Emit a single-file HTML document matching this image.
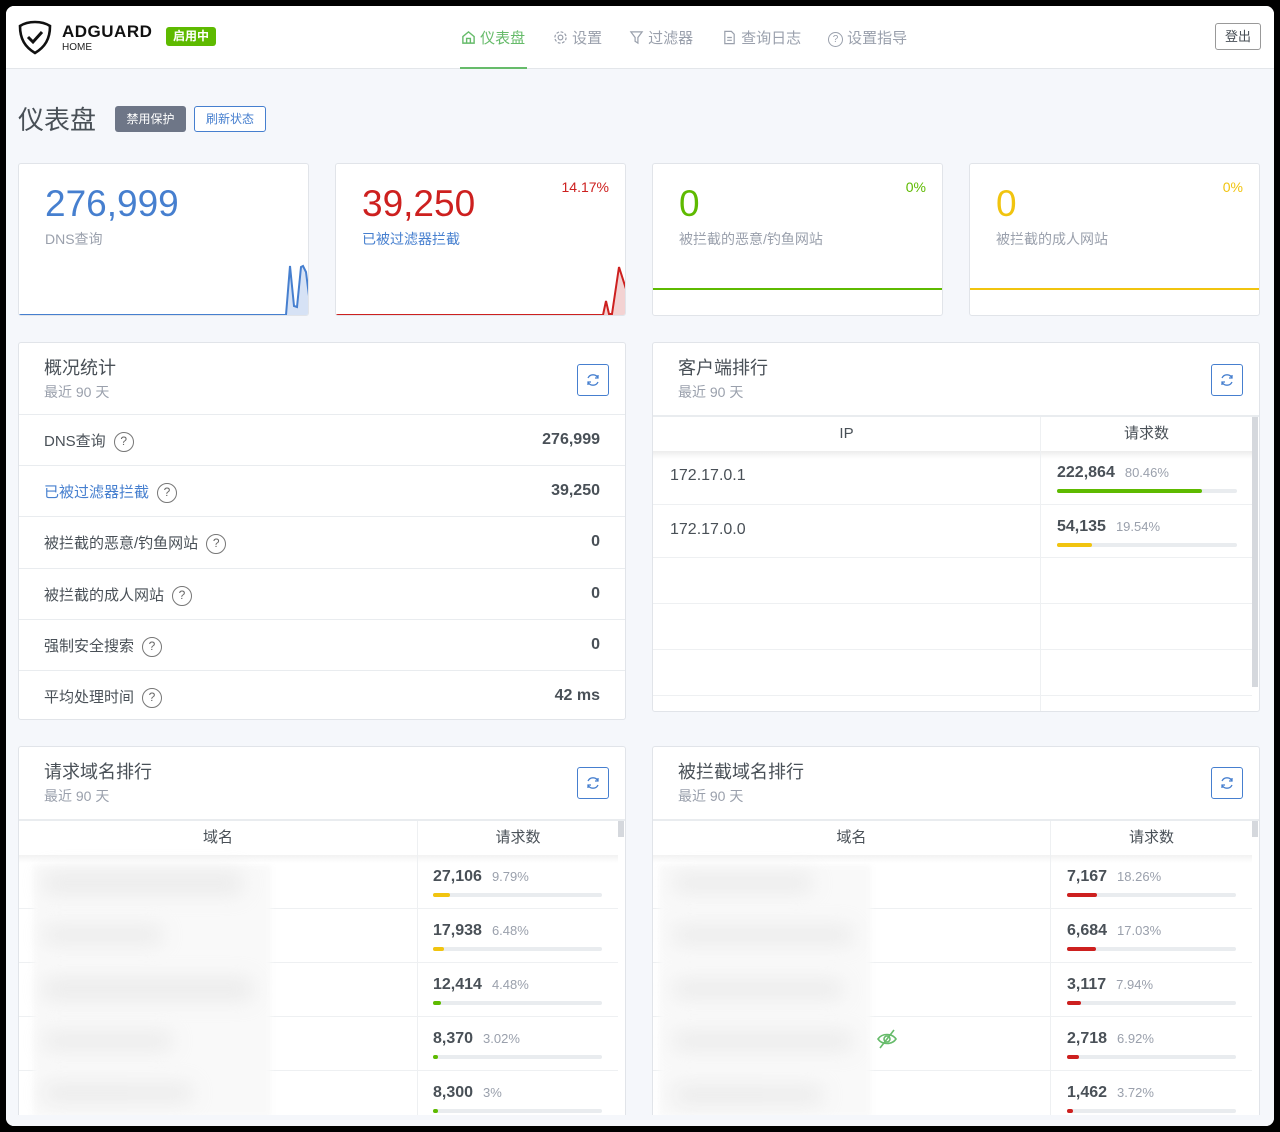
<!DOCTYPE html>
<html><head><meta charset="utf-8">
<style>
*{box-sizing:border-box;margin:0;padding:0}
body{width:1280px;height:1132px;background:#000;font-family:"Liberation Sans","Noto Sans CJK SC",sans-serif;color:#495057;position:relative;overflow:hidden}
.a{position:absolute}
#page{left:6px;top:6px;width:1268px;height:1120px;background:#f5f7fb;border-radius:8px;overflow:hidden}
#hdr{left:0;top:0;width:1268px;height:63px;background:#fff;border-bottom:1px solid #e3e6ea}
.card{position:absolute;background:#fff;border:1px solid #e1e4e9;border-radius:3px;overflow:hidden}
.nav{font-size:15px;color:#9aa0ac;top:21px}
.srow{position:absolute;left:0;width:606px;height:51px;border-top:1px solid #e9ecef;font-size:15px;color:#495057}
.srow .l{position:absolute;left:25px;top:15px}
.srow .r{position:absolute;right:25px;top:16px;font-size:16px;font-weight:bold;color:#495057}
.q{display:inline-block;width:20px;height:20px;border:1.5px solid #777;border-radius:50%;font-size:12px;text-align:center;line-height:17px;color:#666;vertical-align:middle;margin-left:8px}
.rf{position:absolute;width:32px;height:32px;border:1px solid #467fcf;border-radius:3px}
.ctitle{position:absolute;left:25px;top:11px;font-size:18px;color:#495057}
.csub{position:absolute;left:25px;top:39px;font-size:14px;color:#9aa0ac}
.th{position:absolute;top:0;height:34px;font-size:15px;color:#495057;text-align:center;line-height:34px;background:#fff}
.num{font-size:16px;font-weight:bold;color:#495057}
.pct{font-size:13px;color:#9aa0ac;margin-left:10px}
.bar{position:absolute;height:4px;width:180px;background:#e9ecef;border-radius:2px}
.bar i{display:block;height:4px;border-radius:2px}
.blur{position:absolute;background:#d8d8d8;filter:blur(10px);border-radius:6px;opacity:.4}
</style></head><body>
<div id="page" class="a">
 <div id="hdr" class="a">
  <svg class="a" style="left:11px;top:13px" width="36" height="36" viewBox="0 0 36 36"><path d="M18 3 C11 3 6 5 3 7 C3 20 8 28 18 34 C28 28 33 20 33 7 C30 5 25 3 18 3Z" fill="none" stroke="#111" stroke-width="2.6"/><path d="M11 18 L16 23 L25 13" fill="none" stroke="#111" stroke-width="3"/></svg>
  <div class="a" style="left:56px;top:16px;font-size:17px;font-weight:bold;color:#111;letter-spacing:.5px">ADGUARD</div>
  <div class="a" style="left:56px;top:36px;font-size:10px;color:#222">HOME</div>
  <div class="a" style="left:160px;top:21px;width:50px;height:19px;background:#5eba00;border-radius:3px;color:#fff;font-size:12px;font-weight:bold;text-align:center;line-height:19px">启用中</div>
  <div class="a nav" style="left:455px;color:#66bb6a"><svg width="15" height="15" viewBox="0 0 16 16" style="vertical-align:-2px"><path d="M2 7 L8 2 L14 7 V14 H2Z M6 14 V9 H10 V14" fill="none" stroke="#66bb6a" stroke-width="1.5"/></svg> 仪表盘</div>
  <div class="a" style="left:454px;top:61px;width:67px;height:2px;background:#66bb6a"></div>
  <div class="a nav" style="left:547px"><svg width="15" height="15" viewBox="0 0 16 16" style="vertical-align:-2px"><circle cx="8" cy="8" r="2.5" fill="none" stroke="#9aa0ac" stroke-width="1.3"/><circle cx="8" cy="8" r="6" fill="none" stroke="#9aa0ac" stroke-width="1.3" stroke-dasharray="3 1.7"/></svg> 设置</div>
  <div class="a nav" style="left:623px"><svg width="15" height="15" viewBox="0 0 16 16" style="vertical-align:-2px"><path d="M2 2 H14 L9.5 8 V14 L6.5 12 V8Z" fill="none" stroke="#9aa0ac" stroke-width="1.3"/></svg> 过滤器</div>
  <div class="a nav" style="left:716px"><svg width="15" height="15" viewBox="0 0 16 16" style="vertical-align:-2px"><path d="M3 1.5 H10 L13 4.5 V14.5 H3Z M5.5 8 H10.5 M5.5 11 H10.5" fill="none" stroke="#9aa0ac" stroke-width="1.3"/></svg> 查询日志</div>
  <div class="a nav" style="left:822px"><span style="display:inline-block;width:15px;height:15px;border:1.3px solid #9aa0ac;border-radius:50%;font-size:10px;text-align:center;line-height:13px;vertical-align:1px">?</span> 设置指导</div>
  <div class="a" style="left:1209px;top:17px;width:46px;height:27px;border:1px solid #999;border-radius:3px;font-size:13px;text-align:center;line-height:25px;color:#495057">登出</div>
 </div>
 <div class="a" style="left:12px;top:94px;font-size:26px;color:#495057">仪表盘</div>
 <div class="a" style="left:109px;top:100px;width:71px;height:26px;background:#6e7687;border-radius:3px;color:#fff;font-size:12px;text-align:center;line-height:26px">禁用保护</div>
 <div class="a" style="left:188px;top:100px;width:72px;height:26px;border:1px solid #467fcf;border-radius:3px;color:#467fcf;font-size:12px;text-align:center;line-height:24px;background:#fff">刷新状态</div>

 <div class="card" style="left:12px;top:157px;width:291px;height:153px">
  <div class="a" style="left:26px;top:19px;font-size:37px;color:#467fcf">276,999</div>
  <div class="a" style="left:26px;top:65px;font-size:14px;color:#9aa0ac">DNS查询</div>
  <svg class="a" style="left:0;top:90px" width="291" height="63"><path d="M0 61 L267 61 L271 12 L275 52 L278 53 L282 13 L284 12 L287 18 L290 42 L290 61Z" fill="#d6e2f5"/><path d="M0 61 L267 61 L271 12 L275 52 L278 53 L282 13 L284 12 L287 18 L290 42" fill="none" stroke="#467fcf" stroke-width="2"/></svg>
 </div>
 <div class="card" style="left:329px;top:157px;width:291px;height:153px">
  <div class="a" style="left:26px;top:19px;font-size:37px;color:#cd201f">39,250</div>
  <div class="a" style="left:26px;top:65px;font-size:14px;color:#467fcf">已被过滤器拦截</div>
  <div class="a" style="right:16px;top:15px;font-size:14px;color:#cd201f">14.17%</div>
  <svg class="a" style="left:0;top:90px" width="291" height="63"><path d="M0 61 L267 61 L270 47 L273 60 L276 60 L283 13 L290 35 L290 61Z" fill="#f3d2d2"/><path d="M0 61 L267 61 L270 47 L273 60 L276 60 L283 13 L290 35" fill="none" stroke="#cd201f" stroke-width="2"/></svg>
 </div>
 <div class="card" style="left:646px;top:157px;width:291px;height:153px">
  <div class="a" style="left:26px;top:19px;font-size:37px;color:#5eba00">0</div>
  <div class="a" style="left:26px;top:65px;font-size:14px;color:#9aa0ac">被拦截的恶意/钓鱼网站</div>
  <div class="a" style="right:16px;top:15px;font-size:14px;color:#5eba00">0%</div>
  <div class="a" style="left:0;top:124px;width:291px;height:2px;background:#5eba00"></div>
 </div>
 <div class="card" style="left:963px;top:157px;width:291px;height:153px">
  <div class="a" style="left:26px;top:19px;font-size:37px;color:#f1c40f">0</div>
  <div class="a" style="left:26px;top:65px;font-size:14px;color:#9aa0ac">被拦截的成人网站</div>
  <div class="a" style="right:16px;top:15px;font-size:14px;color:#f1c40f">0%</div>
  <div class="a" style="left:0;top:124px;width:291px;height:2px;background:#f1c40f"></div>
 </div>

 <div class="card" style="left:12px;top:336px;width:608px;height:378px">
  <div class="ctitle">概况统计</div><div class="csub">最近 90 天</div>
  <div class="rf" style="left:558px;top:21px"><svg width="30" height="30" viewBox="0 0 30 30"><path d="M10 13 A5.5 5.5 0 0 1 20 13 M20 17 A5.5 5.5 0 0 1 10 17" fill="none" stroke="#467fcf" stroke-width="1.3"/><path d="M20 10 V13 H17 M10 20 V17 H13" fill="none" stroke="#467fcf" stroke-width="1.3"/></svg></div>
  <div class="srow" style="top:71px"><span class="l">DNS查询<span class="q">?</span></span><span class="r">276,999</span></div>
  <div class="srow" style="top:122px"><span class="l" style="color:#467fcf">已被过滤器拦截<span class="q">?</span></span><span class="r">39,250</span></div>
  <div class="srow" style="top:173px;height:52px"><span class="l">被拦截的恶意/钓鱼网站<span class="q">?</span></span><span class="r">0</span></div>
  <div class="srow" style="top:225px"><span class="l">被拦截的成人网站<span class="q">?</span></span><span class="r">0</span></div>
  <div class="srow" style="top:276px"><span class="l">强制安全搜索<span class="q">?</span></span><span class="r">0</span></div>
  <div class="srow" style="top:327px"><span class="l">平均处理时间<span class="q">?</span></span><span class="r">42 ms</span></div>
 </div>

 <div class="card" style="left:646px;top:336px;width:608px;height:370px">
  <div class="ctitle">客户端排行</div><div class="csub">最近 90 天</div>
  <div class="rf" style="left:558px;top:21px"><svg width="30" height="30" viewBox="0 0 30 30"><path d="M10 13 A5.5 5.5 0 0 1 20 13 M20 17 A5.5 5.5 0 0 1 10 17" fill="none" stroke="#467fcf" stroke-width="1.3"/><path d="M20 10 V13 H17 M10 20 V17 H13" fill="none" stroke="#467fcf" stroke-width="1.3"/></svg></div>
  <div class="a" style="left:0;top:72px;width:608px;height:298px;border-top:2px solid #e9ecef">
   <div class="th" style="left:0;width:387px">IP</div>
   <div class="th" style="left:387px;width:212px;border-left:1px solid #eef0f2">请求数</div>
   <div class="a" style="left:0;top:34px;width:599px;height:8px;background:linear-gradient(#00000012,#0000)"></div>
   <div class="a" style="left:387px;top:34px;width:1px;height:264px;background:#eef0f2"></div>
   <div class="a" style="left:0;top:87px;width:599px;height:1px;background:#eef0f2"></div>
   <div class="a" style="left:0;top:140px;width:599px;height:1px;background:#eef0f2"></div>
   <div class="a" style="left:0;top:186px;width:599px;height:1px;background:#eef0f2"></div>
   <div class="a" style="left:0;top:232px;width:599px;height:1px;background:#eef0f2"></div>
   <div class="a" style="left:0;top:278px;width:599px;height:1px;background:#eef0f2"></div>
   <div class="a" style="left:599px;top:0;width:6px;height:270px;background:#d5d8dd"></div>
   <div class="a" style="left:17px;top:50px;font-size:16px">172.17.0.1</div>
   <div class="a" style="left:17px;top:104px;font-size:16px">172.17.0.0</div>
   <div class="a" style="left:404px;top:47px"><span class="num">222,864</span><span class="pct">80.46%</span></div>
   <div class="bar" style="left:404px;top:72px"><i style="width:145px;background:#5eba00"></i></div>
   <div class="a" style="left:404px;top:101px"><span class="num">54,135</span><span class="pct">19.54%</span></div>
   <div class="bar" style="left:404px;top:126px"><i style="width:35px;background:#f1c40f"></i></div>
  </div>
 </div>

 <div class="card" style="left:12px;top:740px;width:608px;height:380px">
  <div class="ctitle">请求域名排行</div><div class="csub">最近 90 天</div>
  <div class="rf" style="left:558px;top:20px"><svg width="30" height="30" viewBox="0 0 30 30"><path d="M10 13 A5.5 5.5 0 0 1 20 13 M20 17 A5.5 5.5 0 0 1 10 17" fill="none" stroke="#467fcf" stroke-width="1.3"/><path d="M20 10 V13 H17 M10 20 V17 H13" fill="none" stroke="#467fcf" stroke-width="1.3"/></svg></div>
  <div class="a" style="left:0;top:72px;width:608px;height:308px;border-top:2px solid #e9ecef">
   <div class="th" style="left:0;width:398px">域名</div>
   <div class="th" style="left:398px;width:201px;border-left:1px solid #eef0f2">请求数</div>
   <div class="a" style="left:599px;top:0;width:6px;height:16px;background:#d5d8dd"></div>
   <div class="a" style="left:0;top:34px;width:599px;height:8px;background:linear-gradient(#0000000d,#0000)"></div>
   <div class="a" style="left:398px;top:34px;width:1px;height:280px;background:#eef0f2"></div>
   <div class="a" style="left:0;top:87px;width:599px;height:1px;background:#eef0f2"></div>
   <div class="a" style="left:0;top:141px;width:599px;height:1px;background:#eef0f2"></div>
   <div class="a" style="left:0;top:195px;width:599px;height:1px;background:#eef0f2"></div>
   <div class="a" style="left:0;top:249px;width:599px;height:1px;background:#eef0f2"></div>
   <div class="a" style="left:14px;top:44px;width:238px;height:252px;background:#f9f9f9;filter:blur(3px)"></div>
   <div class="blur" style="left:24px;top:50px;width:200px;height:24px"></div>
   <div class="blur" style="left:24px;top:104px;width:120px;height:20px"></div>
   <div class="blur" style="left:24px;top:156px;width:210px;height:24px"></div>
   <div class="blur" style="left:24px;top:210px;width:130px;height:20px"></div>
   <div class="blur" style="left:24px;top:262px;width:150px;height:20px"></div>
   <div class="a" style="left:414px;top:47px"><span class="num">27,106</span><span class="pct">9.79%</span></div>
   <div class="bar" style="left:414px;top:72px;width:169px"><i style="width:17px;background:#f1c40f"></i></div>
   <div class="a" style="left:414px;top:101px"><span class="num">17,938</span><span class="pct">6.48%</span></div>
   <div class="bar" style="left:414px;top:126px;width:169px"><i style="width:11px;background:#f1c40f"></i></div>
   <div class="a" style="left:414px;top:155px"><span class="num">12,414</span><span class="pct">4.48%</span></div>
   <div class="bar" style="left:414px;top:180px;width:169px"><i style="width:8px;background:#5eba00"></i></div>
   <div class="a" style="left:414px;top:209px"><span class="num">8,370</span><span class="pct">3.02%</span></div>
   <div class="bar" style="left:414px;top:234px;width:169px"><i style="width:5px;background:#5eba00"></i></div>
   <div class="a" style="left:414px;top:263px"><span class="num">8,300</span><span class="pct">3%</span></div>
   <div class="bar" style="left:414px;top:288px;width:169px"><i style="width:5px;background:#5eba00"></i></div>
  </div>
 </div>

 <div class="card" style="left:646px;top:740px;width:608px;height:380px">
  <div class="ctitle">被拦截域名排行</div><div class="csub">最近 90 天</div>
  <div class="rf" style="left:558px;top:20px"><svg width="30" height="30" viewBox="0 0 30 30"><path d="M10 13 A5.5 5.5 0 0 1 20 13 M20 17 A5.5 5.5 0 0 1 10 17" fill="none" stroke="#467fcf" stroke-width="1.3"/><path d="M20 10 V13 H17 M10 20 V17 H13" fill="none" stroke="#467fcf" stroke-width="1.3"/></svg></div>
  <div class="a" style="left:0;top:72px;width:608px;height:308px;border-top:2px solid #e9ecef">
   <div class="th" style="left:0;width:397px">域名</div>
   <div class="th" style="left:397px;width:202px;border-left:1px solid #eef0f2">请求数</div>
   <div class="a" style="left:599px;top:0;width:6px;height:16px;background:#d5d8dd"></div>
   <div class="a" style="left:0;top:34px;width:599px;height:8px;background:linear-gradient(#0000000d,#0000)"></div>
   <div class="a" style="left:397px;top:34px;width:1px;height:280px;background:#eef0f2"></div>
   <div class="a" style="left:0;top:87px;width:599px;height:1px;background:#eef0f2"></div>
   <div class="a" style="left:0;top:141px;width:599px;height:1px;background:#eef0f2"></div>
   <div class="a" style="left:0;top:195px;width:599px;height:1px;background:#eef0f2"></div>
   <div class="a" style="left:0;top:249px;width:599px;height:1px;background:#eef0f2"></div>
   <div class="a" style="left:6px;top:44px;width:212px;height:252px;background:#f9f9f9;filter:blur(3px)"></div>
   <div class="blur" style="left:20px;top:52px;width:140px;height:20px"></div>
   <div class="blur" style="left:20px;top:104px;width:180px;height:20px"></div>
   <div class="blur" style="left:20px;top:158px;width:170px;height:20px"></div>
   <div class="blur" style="left:20px;top:210px;width:180px;height:20px"></div>
   <div class="blur" style="left:20px;top:264px;width:150px;height:20px"></div>
   <svg class="a" style="left:222px;top:206px" width="24" height="24" viewBox="0 0 24 24"><path d="M3 12 C7 6 17 6 21 12 C17 18 7 18 3 12Z" fill="none" stroke="#66bb6a" stroke-width="1.6"/><circle cx="12" cy="12" r="3" fill="none" stroke="#66bb6a" stroke-width="1.6"/><path d="M5 21 L19 3" stroke="#66bb6a" stroke-width="1.6"/></svg>
   <div class="a" style="left:414px;top:47px"><span class="num">7,167</span><span class="pct">18.26%</span></div>
   <div class="bar" style="left:414px;top:72px;width:169px"><i style="width:30px;background:#cd201f"></i></div>
   <div class="a" style="left:414px;top:101px"><span class="num">6,684</span><span class="pct">17.03%</span></div>
   <div class="bar" style="left:414px;top:126px;width:169px"><i style="width:29px;background:#cd201f"></i></div>
   <div class="a" style="left:414px;top:155px"><span class="num">3,117</span><span class="pct">7.94%</span></div>
   <div class="bar" style="left:414px;top:180px;width:169px"><i style="width:14px;background:#cd201f"></i></div>
   <div class="a" style="left:414px;top:209px"><span class="num">2,718</span><span class="pct">6.92%</span></div>
   <div class="bar" style="left:414px;top:234px;width:169px"><i style="width:12px;background:#cd201f"></i></div>
   <div class="a" style="left:414px;top:263px"><span class="num">1,462</span><span class="pct">3.72%</span></div>
   <div class="bar" style="left:414px;top:288px;width:169px"><i style="width:6px;background:#cd201f"></i></div>
  </div>
 </div>
 <div class="a" style="left:0;top:1109px;width:1268px;height:11px;background:#f5f7fb"></div>
</div>
</body></html>
